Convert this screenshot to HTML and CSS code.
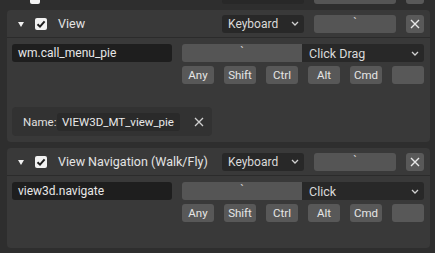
FILE: index.html
```html
<!DOCTYPE html>
<html lang="en">
<head>
    <meta charset="UTF-8">
    <title>Keymap</title>
    <link rel="stylesheet" href="styles.css">
</head>
<body>
    <div class="list">
        <!-- tail of the item above, scrolled off -->
        <div class="prev">
            <span class="check small"></span>
            <span class="prev-title"></span>
            <div class="select"></div>
            <div class="keyfield"></div>
            <div class="xbtn"></div>
        </div>

        <div class="card">
            <div class="card-head">
                <span class="tri"></span>
                <span class="check"><svg width="12" height="12" viewBox="0 0 12 12"><polyline points="2.5,6.2 5,8.6 9.6,3.4" fill="none" stroke="#1e1e1e" stroke-width="2"/></svg></span>
                <span class="title">View</span>
                <div class="select"><span>Keyboard</span><svg class="chev" width="8" height="5" viewBox="0 0 8 5"><polyline points="1,1 4,4 7,1" fill="none" stroke="#d0d0d0" stroke-width="1.3"/></svg></div>
                <div class="keyfield">`</div>
                <div class="xbtn"><svg width="10" height="10" viewBox="0 0 10 10"><path d="M1 1 L9 9 M9 1 L1 9" stroke="#e8e8e8" stroke-width="1.4"/></svg></div>
            </div>
            <div class="card-body">
                <div class="row">
                    <div class="opfield">wm.call_menu_pie</div>
                    <div class="event">
                        <div class="keyfield wide">`</div>
                        <div class="select wide"><span>Click Drag</span><svg class="chev" width="8" height="5" viewBox="0 0 8 5"><polyline points="1,1 4,4 7,1" fill="none" stroke="#d0d0d0" stroke-width="1.3"/></svg></div>
                    </div>
                </div>
                <div class="row mods">
                    <div class="mod">Any</div>
                    <div class="mod">Shift</div>
                    <div class="mod">Ctrl</div>
                    <div class="mod">Alt</div>
                    <div class="mod">Cmd</div>
                    <div class="mod"></div>
                </div>
                <div class="props">
                    <span class="label">Name:</span>
                    <div class="namefield">VIEW3D_MT_view_pie</div>
                    <svg class="clear" width="10" height="10" viewBox="0 0 10 10"><path d="M1 1 L9 9 M9 1 L1 9" stroke="#cfcfcf" stroke-width="1.3"/></svg>
                </div>
            </div>
        </div>

        <div class="card">
            <div class="card-head">
                <span class="tri"></span>
                <span class="check"><svg width="12" height="12" viewBox="0 0 12 12"><polyline points="2.5,6.2 5,8.6 9.6,3.4" fill="none" stroke="#1e1e1e" stroke-width="2"/></svg></span>
                <span class="title">View Navigation (Walk/Fly)</span>
                <div class="select"><span>Keyboard</span><svg class="chev" width="8" height="5" viewBox="0 0 8 5"><polyline points="1,1 4,4 7,1" fill="none" stroke="#d0d0d0" stroke-width="1.3"/></svg></div>
                <div class="keyfield">`</div>
                <div class="xbtn"><svg width="10" height="10" viewBox="0 0 10 10"><path d="M1 1 L9 9 M9 1 L1 9" stroke="#e8e8e8" stroke-width="1.4"/></svg></div>
            </div>
            <div class="card-body tall">
                <div class="row">
                    <div class="opfield">view3d.navigate</div>
                    <div class="event">
                        <div class="keyfield wide">`</div>
                        <div class="select wide"><span>Click</span><svg class="chev" width="8" height="5" viewBox="0 0 8 5"><polyline points="1,1 4,4 7,1" fill="none" stroke="#d0d0d0" stroke-width="1.3"/></svg></div>
                    </div>
                </div>
                <div class="row mods">
                    <div class="mod">Any</div>
                    <div class="mod">Shift</div>
                    <div class="mod">Ctrl</div>
                    <div class="mod">Alt</div>
                    <div class="mod">Cmd</div>
                    <div class="mod"></div>
                </div>
            </div>
        </div>
    </div>
</body>
</html>
```

FILE: styles.css
```css
body {
    margin: 0;
    background: #2e2e2e;
    font-family: Roboto, "DejaVu Sans", sans-serif;
    font-size: 12px;
    color: #e6e6e6;
    overflow: hidden;
    height: 253px;
}
.list {
    padding: 0 5px 0 7px;
}
.prev {
    height: 4px;
    overflow: hidden;
    display: flex;
    align-items: flex-end;
    margin-bottom: 6px;
    padding-right: 6px;
}
.prev .check.small {
    margin-left: 23px;
    width: 10px;
    height: 18px;
}
.prev-title {
    flex: 1;
}
.card {
    background: #393939;
    border-radius: 4px;
    margin-bottom: 6px;
}
.card-head {
    height: 27px;
    display: flex;
    align-items: center;
    border-bottom: 1px solid #2b2b2b;
    padding: 0 6px 0 11px;
}
.tri {
    width: 0;
    height: 0;
    border-left: 3px solid transparent;
    border-right: 3px solid transparent;
    border-top: 5px solid #f0f0f0;
    margin-top: 1px;
}
.check {
    width: 12px;
    height: 12px;
    background: #f2f2f2;
    border-radius: 2px;
    margin-left: 11px;
    display: flex;
}
.title {
    flex: 1;
    margin-left: 11px;
    font-size: 12.5px;
    color: #e4e4e4;
}
.select {
    width: 82px;
    height: 18px;
    background: #282828;
    border-radius: 3px;
    display: flex;
    align-items: center;
    justify-content: space-between;
    padding: 0 5px 0 6px;
    box-sizing: border-box;
    font-size: 12px;
    color: #dadada;
}
.keyfield {
    width: 82px;
    height: 18px;
    background: #555555;
    border-radius: 3px;
    margin-left: 10px;
    text-align: center;
    line-height: 16px;
    color: #cfcfcf;
}
.xbtn {
    width: 18px;
    height: 18px;
    background: #595959;
    border-radius: 3px;
    margin-left: 10px;
    display: flex;
    align-items: center;
    justify-content: center;
}
.card-body {
    padding: 6px 6px 6px 5px;
}
.card-body.tall {
    padding-bottom: 26px;
}
.row {
    display: flex;
    height: 18px;
}
.opfield {
    width: 160px;
    background: #1e1e1e;
    border-radius: 3px;
    padding-left: 6px;
    box-sizing: border-box;
    line-height: 18px;
    font-size: 12px;
    color: #e8e8e8;
}
.event {
    flex: 1;
    display: flex;
    margin-left: 10px;
}
.keyfield.wide {
    width: 120px;
    margin-left: 0;
    border-radius: 3px 0 0 3px;
}
.select.wide {
    flex: 1;
    width: auto;
    border-radius: 0 3px 3px 0;
    padding-left: 7px;
    font-size: 12.5px;
}
.mods {
    margin-top: 4px;
    padding-left: 170px;
    gap: 10px;
}
.mod {
    flex: 1;
    background: #585858;
    border-radius: 3px;
    text-align: center;
    line-height: 18px;
    font-size: 11.5px;
    color: #e6e6e6;
}
.props {
    margin-top: 23px;
    width: 200px;
    height: 29px;
    background: #323232;
    border-radius: 4px;
    display: flex;
    align-items: center;
    box-sizing: border-box;
    padding-left: 11px;
}
.label {
    color: #e0e0e0;
    width: 34px;
    font-size: 11.5px;
    white-space: nowrap;
}
.namefield {
    width: 123px;
    height: 18px;
    background: #2a2a2a;
    border-radius: 3px;
    line-height: 18px;
    padding-left: 5px;
    box-sizing: border-box;
    font-size: 11.5px;
    white-space: nowrap;
    overflow: hidden;
    color: #e8e8e8;
}
.clear {
    margin-left: 14px;
}
```
